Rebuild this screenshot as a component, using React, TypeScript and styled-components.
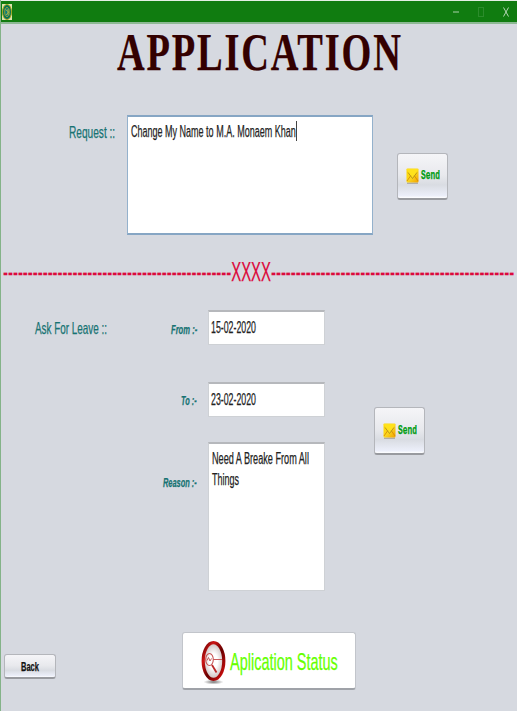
import React, { useLayoutEffect, useRef, useState } from 'react';
import styled, { createGlobalStyle } from 'styled-components';

const Global = createGlobalStyle`
  * { box-sizing: border-box; }
  body { margin: 0; background: #d6d9e0; overflow: hidden; }
`;

const Frame = styled.div`
  width: 517px;
  height: 711px;
  display: flex;
  flex-direction: column;
  background: #d6d9e0;
  border-left: 1px solid #84b388;
  font-family: "Liberation Sans", Arial, sans-serif;
`;

const FitBox = styled.span<{ $w: number; $line: number }>`
  display: block;
  flex: none;
  width: ${p => p.$w}px;
  height: ${p => p.$line}px;
  line-height: ${p => p.$line}px;
  white-space: nowrap;
  overflow: clip;
  overflow-clip-margin: 2px;
`;

const FitInner = styled.span`
  display: inline-block;
  vertical-align: top;
  transform-origin: 0 50%;
  -webkit-text-stroke: 0.25px currentColor;
`;

/* Condenses one line of text horizontally to the given width. */
function Fit({ w, line = 20, children }: { w: number; line?: number; children: React.ReactNode }) {
  const ref = useRef<HTMLSpanElement>(null);
  const [scale, setScale] = useState(1);
  useLayoutEffect(() => {
    if (ref.current && ref.current.offsetWidth) setScale(w / ref.current.offsetWidth);
  }, [w, children]);
  return (
    <FitBox $w={w} $line={line}>
      <FitInner ref={ref} style={{ transform: `scaleX(${scale})` }}>{children}</FitInner>
    </FitBox>
  );
}

const TitleBar = styled.header`
  flex: none;
  height: 24px;
  display: flex;
  align-items: center;
  padding: 0 8px 0 1px;
  background: #107c10;
  border-top: 1px solid #e4efe4;
  border-bottom: 2px solid #8db994;
`;

const WindowControls = styled.div`
  margin-left: auto;
  display: flex;
  align-items: center;
  gap: 19px;
`;

const Heading = styled.h1`
  flex: none;
  height: 91px;
  margin: 0;
  padding: 0 0 0 116px;
  font: bold 53px "Liberation Serif", serif;
  letter-spacing: 2.5px;
  color: #330000;
`;

const RequestRow = styled.section`
  flex: none;
  height: 120px;
  display: flex;
  align-items: flex-start;
  padding-left: 68px;
`;

const Label = styled.label<{ $top?: number }>`
  display: block;
  padding-top: ${p => p.$top ?? 0}px;
  font-size: 16.5px;
  color: #177373;
`;

const FieldLabel = styled(Label)`
  display: flex;
  justify-content: flex-end;
  font-size: 12px;
  font-weight: bold;
  font-style: italic;
`;

const RequestArea = styled.div`
  width: 246px;
  height: 120px;
  margin-left: 12px;
  display: flex;
  padding: 5px 3px;
  background: #fff;
  border: 1px solid #94b1cc;
  border-width: 2px 1px;
  border-top-color: #86a6c4;
  border-bottom-color: #86a6c4;
  font-size: 16px;
  color: #222;
`;

const Caret = styled.span`
  width: 1px;
  height: 20px;
  margin-top: -1px;
  background: #444;
`;

const Button = styled.button<{ $w: number; $h: number }>`
  flex: none;
  width: ${p => p.$w}px;
  height: ${p => p.$h}px;
  display: flex;
  align-items: center;
  padding: 0;
  border: 1px solid #b4b6bb;
  border-bottom: 2px solid #989a9f;
  border-radius: 3px;
  background: linear-gradient(#f5f5f8 0%, #e8e9ed 48%, #d9dce2 70%, #eceffa 95%, #fff 100%);
  font-family: inherit;
`;

const SendButton = styled(Button)<{ $top: number }>`
  margin: ${p => p.$top}px 0 0 auto;
  padding-left: 8px;
  gap: 2px;
  font: bold 12px "Liberation Mono", monospace;
  color: #009c12;
`;

const Divider = styled.div`
  flex: none;
  height: 75px;
  padding: 22px 0 0 2px;
  font-size: 27px;
  color: #dc0a3c;
`;

const LeaveSection = styled.section`
  flex: none;
  height: 281px;
  display: flex;
  align-items: flex-start;
  padding: 0 92px 0 34px;
`;

const LeaveForm = styled.div`
  display: grid;
  grid-template-columns: 90px 117px;
  grid-template-rows: 35px 37px 35px 25px 149px;
  column-gap: 11px;
  & > :nth-child(3), & > :nth-child(4) { grid-row: 3; }
  & > :nth-child(5), & > :nth-child(6) { grid-row: 5; }
`;

const DateField = styled.div`
  display: flex;
  align-items: flex-start;
  padding: 6px 0 0 2px;
  background: #fff;
  border: 1px solid #ced1d5;
  border-top: 2px solid #b6b8bc;
  font-size: 16px;
  color: #222;
`;

const ReasonField = styled(DateField)`
  flex-direction: column;
  padding: 4px 0 0 3px;
`;

const Footer = styled.footer`
  flex: 1;
  display: flex;
  align-items: flex-start;
  padding-left: 3px;
`;

const BackButton = styled(Button)`
  margin-top: 63px;
  padding: 1px 0 0 16px;
  font-size: 12.5px;
  font-weight: bold;
  color: #111;
`;

const StatusButton = styled(Button)`
  margin: 41px 0 0 126px;
  padding: 2px 0 0 18px;
  gap: 4px;
  background: #fff;
  border-color: #c2c5cb;
  border-bottom-color: #9fa2a8;
  font-size: 24px;
  color: #66ff00;
`;

const RequestSend = styled.div`
  margin-left: 24px;
`;

const AppIcon = () => (
  <svg width="10" height="16" viewBox="0 0 10 16">
    <rect width="10" height="16" fill="#d9e3ae" />
    <ellipse cx="5" cy="8" rx="4.5" ry="7.5" fill="#087257" stroke="#a8a817" />
    <ellipse cx="5" cy="8" rx="2.3" ry="4.5" fill="#087e79" stroke="#b2aa2b" strokeWidth=".8" />
    <path d="M3.5 5.5 6.7 8 4 11M6 5v6" fill="none" stroke="#c5bd3d" strokeWidth=".8" />
  </svg>
);

const MailIcon = () => (
  <svg width="13" height="16" viewBox="0 0 13 16">
    <defs>
      <linearGradient id="mail" x1="0" y1="0" x2="1" y2="1">
        <stop offset="0" stopColor="#ffd900" />
        <stop offset=".5" stopColor="#fbd81e" />
        <stop offset="1" stopColor="#f0a000" />
      </linearGradient>
    </defs>
    <path d="M1 15.2h11" stroke="#8f8878" opacity=".8" />
    <rect x=".5" y=".5" width="12" height="14" rx="1" fill="url(#mail)" />
    <path d="M.5 1h12L6.5 10z" fill="#ffe21c" />
    <path d="M1 13 4.7 7.7M12 13 8.3 7.7" stroke="#d88b08" strokeWidth=".9" />
    <path d="M2 4.5 6.5 10.5 11 4.5" fill="none" stroke="#a98b1c" strokeWidth=".8" />
  </svg>
);

const StatusIcon = () => (
  <svg width="25" height="46" viewBox="0 0 25 46">
    <defs>
      <linearGradient id="ring" x1="0" y1="0" x2="1" y2="1">
        <stop offset="0" stopColor="#590000" />
        <stop offset=".25" stopColor="#cf1515" />
        <stop offset=".55" stopColor="#680000" />
        <stop offset="1" stopColor="#dc1010" />
      </linearGradient>
      <radialGradient id="glass">
        <stop offset=".4" stopColor="#fff" />
        <stop offset="1" stopColor="#c9bdbd" />
      </radialGradient>
      <radialGradient id="shade">
        <stop offset="0" stopColor="#777" />
        <stop offset="1" stopColor="#fff" />
      </radialGradient>
    </defs>
    <ellipse cx="12.5" cy="43" rx="10" ry="2.5" fill="url(#shade)" />
    <ellipse cx="12.5" cy="22" rx="10.3" ry="18.3" fill="url(#glass)" stroke="url(#ring)" strokeWidth="3.2" />
    <ellipse cx="8.5" cy="20.5" rx="3.8" ry="6" fill="none" stroke="#c75353" strokeWidth="1.1" />
    <path d="M6 21.5 7.5 18.5 9 22 10.5 19.5M12 20.5h9" fill="none" stroke="#c95b5b" />
    <path d="m11 26 4.5 7.5" stroke="#bb2929" strokeWidth="1.8" />
  </svg>
);

function Send({ top, h }: { top: number; h: number }) {
  return (
    <SendButton $w={51} $h={h} $top={top}>
      <MailIcon />
      <Fit w={19} line={14}>Send</Fit>
    </SendButton>
  );
}

export default function App() {
  return (
    <>
      <Global />
      <Frame>
        <TitleBar>
          <AppIcon />
          <WindowControls>
            <svg width="6" height="12" viewBox="0 0 6 12"><path d="M0 6h6" stroke="#a9d0a9" /></svg>
            <svg width="6" height="12" viewBox="0 0 6 12"><rect x=".5" y="1.5" width="5" height="9" fill="none" stroke="#2c8c2c" /></svg>
            <svg width="6" height="12" viewBox="0 0 6 12"><path d="m.5 1.5 5 9m0-9-5 9" stroke="#b4d6b4" /></svg>
          </WindowControls>
        </TitleBar>
        <Heading><Fit w={286} line={56}>APPLICATION</Fit></Heading>
        <RequestRow>
          <Label $top={7}><Fit w={46}>Request ::</Fit></Label>
          <RequestArea>
            <Fit w={165}>Change My Name to M.A. Monaem Khan</Fit>
            <Caret />
          </RequestArea>
          <RequestSend><Send top={38} h={47} /></RequestSend>
        </RequestRow>
        <Divider>
          <Fit w={511} line={30}>{'-'.repeat(46) + 'XXXX' + '-'.repeat(49)}</Fit>
        </Divider>
        <LeaveSection>
          <Label $top={8}><Fit w={72}>Ask For Leave ::</Fit></Label>
          <LeaveForm>
            <FieldLabel $top={10}><Fit w={26}>From :-</Fit></FieldLabel>
            <DateField><Fit w={45}>15-02-2020</Fit></DateField>
            <FieldLabel $top={9}><Fit w={16}>To :-</Fit></FieldLabel>
            <DateField><Fit w={45}>23-02-2020</Fit></DateField>
            <FieldLabel $top={31}><Fit w={34}>Reason :-</Fit></FieldLabel>
            <ReasonField>
              <Fit w={97} line={21}>Need A Breake From All</Fit>
              <Fit w={27} line={21}>Things</Fit>
            </ReasonField>
          </LeaveForm>
          <Send top={97} h={48} />
        </LeaveSection>
        <Footer>
          <BackButton $w={52} $h={25}><Fit w={18}>Back</Fit></BackButton>
          <StatusButton $w={174} $h={58}>
            <StatusIcon />
            <Fit w={108} line={30}>Aplication Status</Fit>
          </StatusButton>
        </Footer>
      </Frame>
    </>
  );
}
